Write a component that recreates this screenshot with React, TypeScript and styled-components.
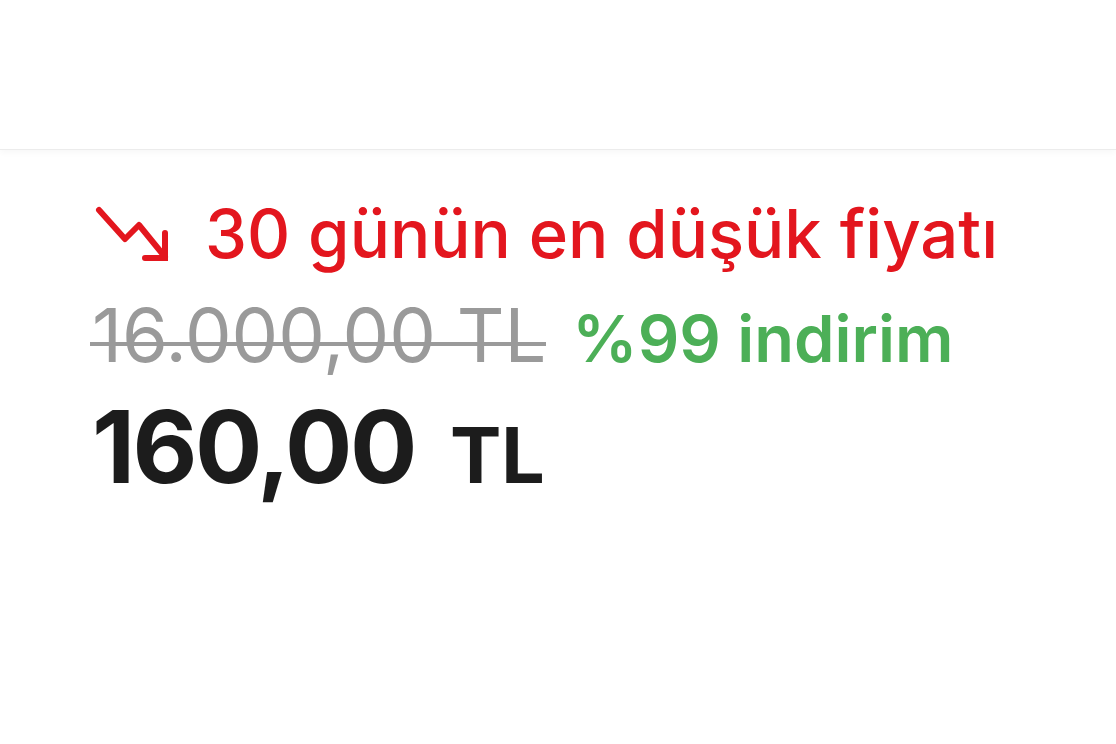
import React from 'react';
import styled, { createGlobalStyle } from 'styled-components';

const GlobalStyle = createGlobalStyle`
  html, body {
    margin: 0;
    padding: 0;
    background: #ffffff;
  }
  body {
    font-family: Inter, "Liberation Sans", sans-serif;
  }
`;

const Page = styled.div`
  width: 1116px;
  height: 744px;
  overflow: hidden;
  background: #ffffff;
`;

const TopBar = styled.div`
  height: 149px;
  border-bottom: 1px solid #ececec;
  box-shadow: 0 3px 6px rgba(0, 0, 0, 0.03);
`;

const PriceBlock = styled.div`
  padding: 41px 0 0 92px;
  display: flex;
  flex-direction: column;
`;

const LowestRow = styled.div`
  display: flex;
  align-items: center;
  gap: 34px;
  height: 84px;
  color: #e3161e;
  font-size: 67px;
  font-weight: 500;
`;

const TrendIcon = styled.svg`
  width: 76px;
  height: 56px;
  margin-left: 3px;
  flex-shrink: 0;
`;

const OldRow = styled.div`
  display: flex;
  align-items: baseline;
  gap: 26px;
  margin-top: 23px;
  line-height: 1;
`;

// strike line sits lower than the default line-through
const OldPrice = styled.span`
  position: relative;
  color: #9a9a9a;
  font-size: 74px;
  font-weight: 400;
  &::after {
    content: '';
    position: absolute;
    left: -2px;
    right: 0;
    top: 44px;
    height: 4px;
    background: #9a9a9a;
  }
`;

const Discount = styled.span`
  color: #4caf57;
  font-size: 65px;
  font-weight: 600;
`;

const NewRow = styled.div`
  display: flex;
  align-items: baseline;
  gap: 35px;
  margin-top: 25px;
  line-height: 1;
  color: #1c1c1c;
  font-weight: 700;
`;

const Amount = styled.span<{ $size: number; $tight?: boolean }>`
  font-size: ${p => p.$size}px;
  letter-spacing: ${p => (p.$tight ? '-2.5px' : '0')};
`;

const App = () => {
  return (
    <Page>
      <GlobalStyle />
      <TopBar />
      <PriceBlock>
        <LowestRow>
          <TrendIcon viewBox="0 0 76 56" fill="none">
            <polyline
              points="4,5 30,34 44,20 70,52"
              stroke="#e3161e"
              strokeWidth="6"
              strokeLinejoin="round"
              strokeLinecap="round"
            />
            <polyline
              points="50,53 70,53 70,28"
              stroke="#e3161e"
              strokeWidth="6"
              strokeLinejoin="miter"
              strokeLinecap="round"
            />
          </TrendIcon>
          <span>30 günün en düşük fiyatı</span>
        </LowestRow>
        <OldRow>
          <OldPrice>16.000,00 TL</OldPrice>
          <Discount>%99 indirim</Discount>
        </OldRow>
        <NewRow>
          <Amount $size={100} $tight>160,00</Amount>
          <Amount $size={77}>TL</Amount>
        </NewRow>
      </PriceBlock>
    </Page>
  );
};

export default App;
